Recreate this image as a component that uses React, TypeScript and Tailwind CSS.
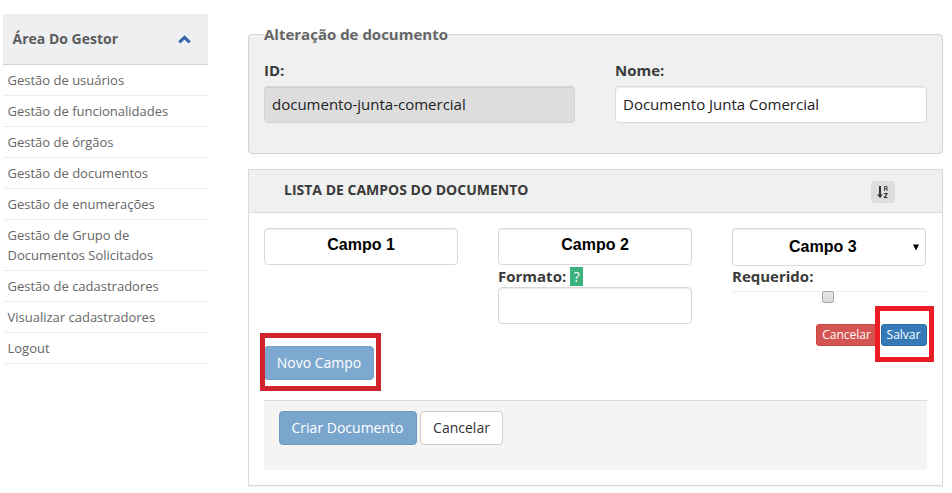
import type { ReactNode } from "react";

const menuItems = [
  "Gestão de usuários",
  "Gestão de funcionalidades",
  "Gestão de órgãos",
  "Gestão de documentos",
  "Gestão de enumerações",
  "Gestão de Grupo de Documentos Solicitados",
  "Gestão de cadastradores",
  "Visualizar cadastradores",
  "Logout",
];

const inputBase =
  "block w-full rounded-[4px] border border-[#d9d9d9] bg-white shadow-[inset_0_1px_1px_rgba(0,0,0,0.075)]";

function Label({ children }: { children: ReactNode }) {
  return <div className="h-5 text-[15px] leading-5 font-bold text-[#3a3a3a]">{children}</div>;
}

function Sidebar() {
  return (
    <aside className="mt-[14px] ml-[3px] w-[205px] shrink-0">
      <div className="flex h-[51px] items-center justify-between border-b border-[#cfd1d2] bg-[#eeeff1] pr-[17px] pl-[9.5px]">
        <span className="pb-[2px] text-[14px] font-bold text-[#5c5c5c]">Área Do Gestor</span>
        <svg width="13" height="9" viewBox="0 0 13 9" className="mt-px">
          <path d="M1.3 7.4 6.5 2.3 11.7 7.4" fill="none" stroke="#3865ad" strokeWidth="3.1" />
        </svg>
      </div>
      <ul>
        {menuItems.map((item) => (
          <li
            key={item}
            className="border-b border-[#ededed] py-[5px] pr-8 pl-[4.5px] text-[13px] leading-5 text-[#666]"
          >
            {item}
          </li>
        ))}
      </ul>
    </aside>
  );
}

function DocumentFields() {
  return (
    <fieldset className="mt-[24px] h-[130px] w-[695px] rounded-[4px] border border-[#d3d5d5] bg-[#eff1f1] px-[15px]">
      <legend className="h-5 text-[15px] leading-5 font-bold text-[#666]">Alteração de documento</legend>
      <div className="mt-[16px] flex gap-10">
        <div className="w-[311px]">
          <Label>ID:</Label>
          <input
            readOnly
            value="documento-junta-comercial"
            className="mt-[6px] block h-[37px] w-full rounded-[4px] border border-[#d3d3d3] bg-[#dddddd] px-[7px] pb-[2px] text-[15px] text-[#222] shadow-[inset_0_1px_1px_rgba(0,0,0,0.075)]"
          />
        </div>
        <div className="w-[312px]">
          <Label>Nome:</Label>
          <input
            readOnly
            value="Documento Junta Comercial"
            className={`${inputBase} mt-[6px] h-[37px] px-[7px] pb-[2px] text-[15px] text-[#222]`}
          />
        </div>
      </div>
    </fieldset>
  );
}

function SortIcon() {
  return (
    <svg width="12" height="14" viewBox="0 0 12 14">
      <path d="M2 1h2v8.5h2L3 13 0 9.5h2z" fill="#333" />
      <path d="M7.5 6V1.5H10V6M7.5 3.8H10" fill="none" stroke="#444" strokeWidth="1" />
      <path d="M7 8.5H10L7.5 12.5H10.5" fill="none" stroke="#333" strokeWidth="1.2" />
    </svg>
  );
}

function Campo({ text }: { text: string }) {
  return (
    <div
      className={`${inputBase} h-[37px] pt-[6px] text-center font-['Liberation_Sans',Arial,sans-serif] text-[16px] leading-5 font-bold text-black`}
    >
      {text}
    </div>
  );
}

function FieldList() {
  return (
    <section className="mt-[15px] h-[317px] w-[695px] border border-[#d9dbdb] bg-white shadow-[0_1px_1px_rgba(0,0,0,0.05)]">
      <header className="flex h-[43px] items-center justify-between border-b border-[#d9dbdb] bg-[#eff1f1] pr-[47px] pl-[35px]">
        <h2 className="pb-1 text-[14px] font-bold text-[#3a3a3a]">LISTA DE CAMPOS DO DOCUMENTO</h2>
        <button className="mt-[2px] flex h-[22px] w-6 items-center justify-center rounded-[3px] bg-[#dcdddd]">
          <SortIcon />
        </button>
      </header>
      <div className="px-[15px] pt-[15px]">
        <div className="flex h-[118px] gap-10">
          <div className="w-[194px]">
            <Campo text="Campo 1" />
          </div>
          <div className="w-[194px] shrink-0">
            <Campo text="Campo 2" />
            <div className="mt-px mb-px flex items-center">
              <Label>Formato:</Label>
              <span className="ml-1 h-[19px] w-[13px] bg-[#3cb281] text-center text-[14px] leading-[19px] text-white">
                ?
              </span>
            </div>
            <input readOnly value="" className={`${inputBase} h-[37px]`} />
          </div>
          <div className="w-[194px] shrink-0">
            <div
              className={`${inputBase} flex h-[38px] items-center pr-[5px] pl-[56px] font-['Liberation_Sans',Arial,sans-serif] text-[16px] font-bold text-black`}
            >
              <span className="grow">Campo 3</span>
              <svg width="8" height="7" viewBox="0 0 8 7">
                <path d="M1 .5h6L4 6.5z" fill="#000" />
              </svg>
            </div>
            <div>
              <Label>Requerido:</Label>
            </div>
            <div className="mt-[5px] flex h-3 justify-center border-t border-[#efefef] pr-[2px]">
              <span className="-mt-px h-3 w-3 shrink-0 rounded-[2px] border border-[#a6a6a6] bg-linear-to-b from-[#e6e6e6] to-[#dadada]" />
            </div>
            <div className="relative -mr-px mt-[21px] flex justify-end gap-px">
              <button className="h-[22px] w-[64px] shrink-0 rounded-[3px] border border-[#cf4541] bg-[#d35450] pr-[3px] text-[12px] leading-[20px] text-white">
                Cancelar
              </button>
              <button className="h-[22px] w-[46px] shrink-0 rounded-[3px] border border-[#2e6da4] bg-[#357ab7] pr-px text-[12px] leading-[20px] text-white">
                Salvar
              </button>
              <span className="absolute -top-[18px] -right-[7px] h-[56px] w-[59px] border-5 border-[#ec1c24]" />
            </div>
          </div>
        </div>
        <div className="relative h-[34px]">
          <button className="h-[34px] w-[110px] rounded-[4px] border border-[#739ec6] bg-[#7da8d0] pb-[2px] text-[14px] text-white">
            Novo Campo
          </button>
          <span className="absolute -top-[13px] -left-[4px] h-[58px] w-[121px] border-5 border-[#d1232c]" />
        </div>
        <footer className="mt-[20px] flex h-[70px] gap-[3px] border-t border-[#d9dbdb] bg-[#f4f4f4] pt-[10px] pl-[15px]">
          <button className="h-[34px] w-[138px] rounded-[4px] border border-[#6f9bc3] bg-[#7aa6ce] pr-px pb-[2px] text-[14px] text-white">
            Criar Documento
          </button>
          <button className="h-[34px] w-[83px] rounded-[4px] border border-[#ccc] bg-white pb-[2px] text-[14px] text-[#333]">
            Cancelar
          </button>
        </footer>
      </div>
    </section>
  );
}

export default function App() {
  return (
    <div className="flex h-[493px] w-[952px] overflow-hidden bg-white font-['Open_Sans',sans-serif]">
      <Sidebar />
      <main className="ml-10 flex w-[695px] shrink-0 flex-col">
        <DocumentFields />
        <FieldList />
      </main>
    </div>
  );
}
